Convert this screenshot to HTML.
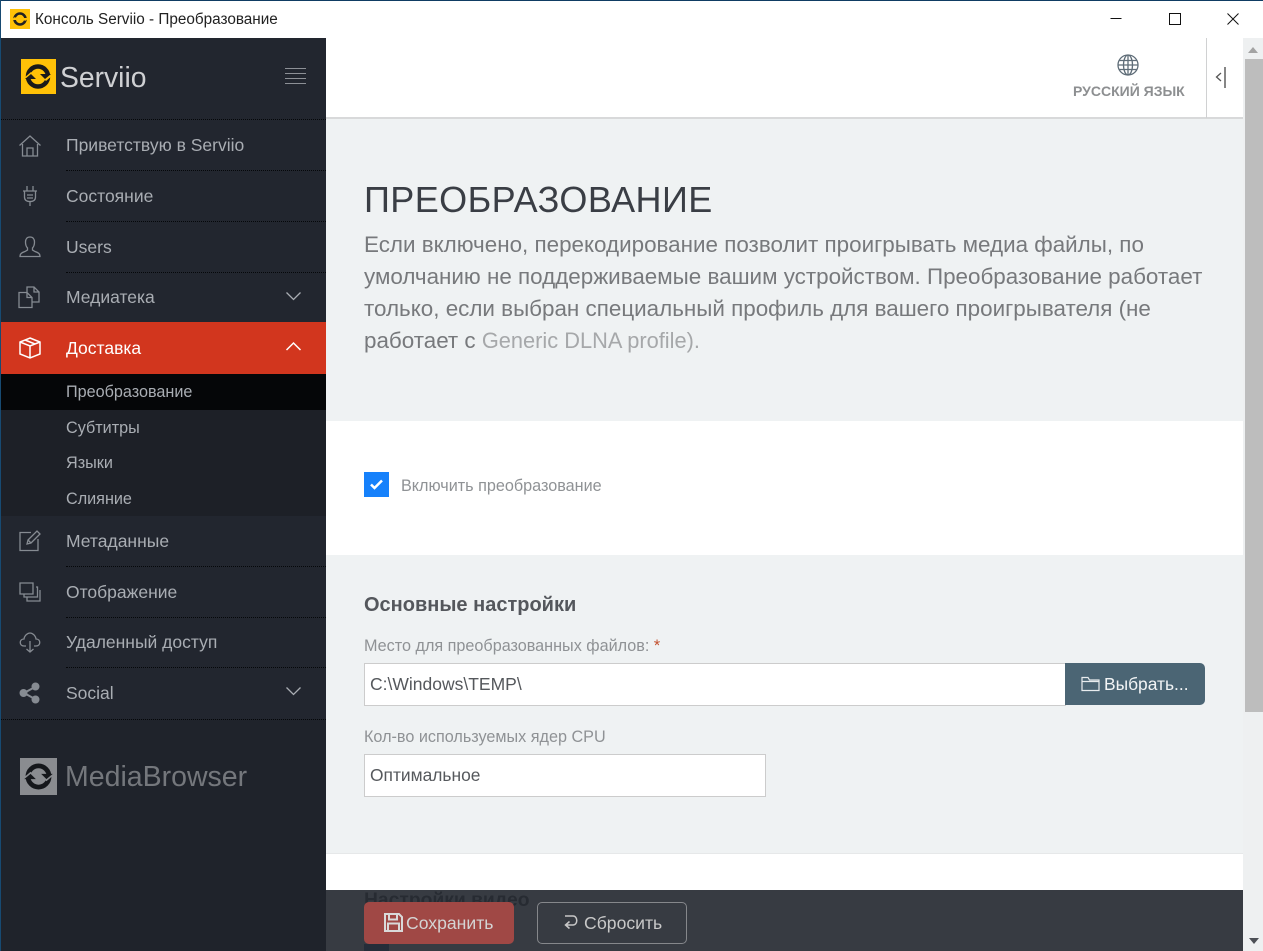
<!DOCTYPE html>
<html><head><meta charset="utf-8"><style>
html,body{margin:0;padding:0;width:1263px;height:951px;overflow:hidden;background:#fff;font-family:"Liberation Sans","Noto Sans CJK SC",sans-serif}
div,a,span.t{position:absolute;white-space:nowrap}
svg{position:absolute;overflow:visible}
.nav{left:66px;font-size:17.5px;line-height:20px;color:#a9adb3}
.sub{left:66px;font-size:16.2px;line-height:20px;color:#a9adb3}
.sep{left:66px;width:260px;height:0;border-top:1px dotted #05070a}
.ic{fill:none;stroke:#868b92;stroke-width:1.3}
.lbl{left:364px;font-size:16.2px;line-height:20px;color:#8f9295}
.lead{left:364px;font-size:22.42px;line-height:32px;color:#77797c}
</style></head><body>
<div style="left:0;top:0;width:1263px;height:1px;background:#0f3c63"></div>
<div style="left:0;top:0;width:1px;height:951px;background:#174a72"></div>
<!-- title bar -->
<div style="left:10px;top:9px;width:20px;height:20px;background:#ffc107"></div>
<svg style="left:10px;top:9px" width="20" height="20" viewBox="0 0 20 20"><circle cx="10" cy="10" r="5.500" fill="none" stroke="#222" stroke-width="2.600"/><path d="M1 11l4-3 3 3zM19 9l-4 3-3-3z" fill="#ffc107"/></svg>
<div style="left:35px;top:10px;font-size:15.3px;line-height:20px;color:#222">Консоль Serviio - Преобразование</div>
<svg style="left:1110px;top:12px" width="130" height="16" fill="none" stroke="#111" stroke-width="1"><path d="M0.500 6.500h11"/><rect x="59.500" y="1.500" width="11" height="11"/><path d="M117.500 1.500l11 11M128.500 1.500l-11 11"/></svg>
<!-- sidebar -->
<div style="left:1px;top:38px;width:325px;height:913px;background:#22262f"></div>
<div style="left:1px;top:719px;width:325px;height:232px;background:#1f232b"></div>
<div style="left:1px;top:119px;width:325px;border-top:1px dotted #05070a"></div>
<div style="left:21px;top:59px;width:35px;height:35px;background:#ffc107"></div>
<svg style="left:21px;top:59px" width="35" height="35" viewBox="0 0 35 35"><circle cx="17" cy="17.500" r="10" fill="none" stroke="#1a1a1a" stroke-width="4.500"/><path d="M3 19l7-6 6 6zM32 16l-7 6-6-6z" fill="#ffc107"/><path d="M4 20l6-5 5 5zM30 15l-6 5-5-5z" fill="#1a1a1a"/></svg>
<div style="left:60px;top:59px;font-size:28.3px;line-height:36px;color:#cfd0d3">Serviio</div>
<svg style="left:285px;top:68px" width="22" height="16" stroke="#8d9096" stroke-width="1"><path d="M0 0.500h21M0 5.500h21M0 10.500h21M0 15.500h21"/></svg>

<svg class="ic" style="left:19px;top:135px" width="22" height="22" viewBox="0 0 22 22"><path d="M0.500 10.500L11 1l10.500 9.500M3.500 9v12h15V9M8 21v-8h6v8"/></svg>
<div class="nav" style="top:135px">Приветствую в Serviio</div>
<div class="sep" style="top:170px"></div>
<svg class="ic" style="left:22px;top:185px" width="16" height="22" viewBox="0 0 16 22"><path d="M5 1v5M11 1v5M1 6h14M2.500 6v6c0 3 2 4.500 5.500 4.500s5.500-1.500 5.500-4.500V6M8 16.500V21M5 10h6M5 13h6"/></svg>
<div class="nav" style="top:186px">Состояние</div>
<div class="sep" style="top:221px"></div>
<svg class="ic" style="left:19px;top:236px" width="22" height="21" viewBox="0 0 22 21"><path d="M1 20.500h20c0-3-2-4-5-5l-2.500-1.500v-2c1.500-1.500 2-3.500 2-6C15.500 3 14 1 11 1S6.500 3 6.500 6c0 2.500.5 4.500 2 6v2L6 15.500c-3 1-5 2-5 5z"/></svg>
<div class="nav" style="top:237px">Users</div>
<div class="sep" style="top:272px"></div>
<svg class="ic" style="left:18px;top:286px" width="23" height="22" viewBox="0 0 23 22"><path d="M1 6.500h8l5 5v10H1zM9 6.500v5h5M9 6V1h7l5 5v10h-7M16 1v5h5"/></svg>
<div class="nav" style="top:287px">Медиатека</div>
<svg style="left:286px;top:292px" width="15" height="9" fill="none" stroke="#a9adb3" stroke-width="1.300"><path d="M0.500 0.500L7.500 7.500 14.500 0.500"/></svg>

<div style="left:1px;top:322px;width:325px;height:52px;background:#d2361e"></div>
<svg style="left:19px;top:337px" fill="none" stroke="#fff" stroke-width="1.500" width="22" height="22" viewBox="0 0 22 22"><path d="M11 1l10 4v12l-10 4-10-4V5zM1 5l10 4 10-4M11 9v12M6 3l10 4"/></svg>
<div class="nav" style="top:338px;color:#fff">Доставка</div>
<svg style="left:286px;top:342px" width="15" height="9" fill="none" stroke="#fff" stroke-width="1.500"><path d="M0.500 8L7.500 1 14.500 8"/></svg>

<div style="left:1px;top:374px;width:325px;height:36px;background:#050608"></div>
<div style="left:1px;top:410px;width:325px;height:106px;background:#1d2027"></div>
<div class="sub" style="top:382px">Преобразование</div>
<div class="sub" style="top:418px">Субтитры</div>
<div class="sub" style="top:453px">Языки</div>
<div class="sub" style="top:489px">Слияние</div>

<svg class="ic" style="left:19px;top:529px" width="22" height="22" viewBox="0 0 22 22"><path d="M12 3.500H1v18h18V10M8 15l1-4L18 2l3 3-9 9zM9 11l3 3"/></svg>
<div class="nav" style="top:531px">Метаданные</div>
<div class="sep" style="top:566px"></div>
<svg class="ic" style="left:19px;top:582px" width="22" height="20" viewBox="0 0 22 20"><path d="M1 1h13v11H1zM17 5h1.500v10H5v-3M21 8v11H8v-4"/></svg>
<div class="nav" style="top:582px">Отображение</div>
<div class="sep" style="top:617px"></div>
<svg class="ic" style="left:19px;top:632px" width="22" height="21" viewBox="0 0 22 21"><path d="M7 14H5c-5 0-5-7 0-7C5.500 3 9 1 11 1s5.500 2 6 6c5 0 5 7 0 7h-2M11 9v11M7.500 17l3.500 3 3.500-3"/></svg>
<div class="nav" style="top:632px">Удаленный доступ</div>
<div class="sep" style="top:667px"></div>
<svg style="left:19px;top:682px" width="22" height="22" viewBox="0 0 22 22" fill="#868b92" stroke="#868b92"><path d="M5 11L16 5M5 11l11 6" stroke-width="2"/><circle cx="4.500" cy="11" r="3.500"/><circle cx="16.500" cy="4.500" r="3.500"/><circle cx="16.500" cy="17.500" r="3.500"/></svg>
<div class="nav" style="top:683px">Social</div>
<svg style="left:286px;top:687px" width="15" height="9" fill="none" stroke="#a9adb3" stroke-width="1.300"><path d="M0.500 0.500L7.500 7.500 14.500 0.500"/></svg>
<div style="left:1px;top:719px;width:325px;border-top:1px dotted #05070a"></div>

<div style="left:20px;top:758px;width:37px;height:37px;background:#8a8c90"></div>
<svg style="left:20px;top:758px" width="37" height="37" viewBox="0 0 35 35"><circle cx="17.500" cy="17.500" r="10" fill="none" stroke="#15171b" stroke-width="4.500"/><path d="M3 19l7-6 6 6zM32 16l-7 6-6-6z" fill="#8a8c90"/><path d="M4 20l6-5 5 5zM31 15l-6 5-5-5z" fill="#15171b"/></svg>
<div style="left:65px;top:759px;font-size:28.5px;line-height:36px;color:#74777c">MediaBrowser</div>

<!-- main -->
<div style="left:326px;top:119px;width:917px;height:302px;background:#eff2f3"></div>
<div style="left:326px;top:117px;width:917px;height:2px;background:#d8d9da"></div>
<div style="left:1206px;top:38px;width:1px;height:80px;background:#d0d1d2"></div>
<svg style="left:1117px;top:54px" width="22" height="22" viewBox="0 0 22 22" fill="none" stroke="#5f6d78" stroke-width="1.300"><circle cx="11" cy="11" r="10"/><ellipse cx="11" cy="11" rx="4.500" ry="10"/><path d="M11 1v20M2 6.500h18M1 11h20M2 15.500h18"/></svg>
<div style="left:1073px;top:82px;font-size:14px;line-height:18px;font-weight:bold;color:#8d8f91">РУССКИЙ ЯЗЫК</div>
<svg style="left:1215px;top:67px" width="12" height="21" fill="none" stroke="#555"><path d="M6 6L1.500 10 6 14" stroke-width="1.300"/><path d="M10 0v21" stroke-width="1.300" stroke="#444"/></svg>

<div style="left:364px;top:180px;font-size:36px;line-height:40px;letter-spacing:.42px;color:#3a3e45">ПРЕОБРАЗОВАНИЕ</div>
<div class="lead" style="top:229px">Если включено, перекодирование позволит проигрывать медиа файлы, по</div>
<div class="lead" style="top:261px">умолчанию не поддерживаемые вашим устройством. Преобразование работает</div>
<div class="lead" style="top:293px">только, если выбран специальный профиль для вашего проигрывателя (не</div>
<div class="lead" style="top:325px">работает с <span style="color:#a6a8aa;font-size:21.8px">Generic DLNA profile).</span></div>

<div style="left:364px;top:472px;width:25px;height:25px;background:#1681fb"></div>
<svg style="left:370px;top:479px" width="13" height="11" fill="none" stroke="#fff" stroke-width="2.500"><path d="M1 5.500l3.500 3.500L12 1.500"/></svg>
<div class="lbl" style="left:401px;top:476px;">Включить преобразование</div>

<div style="left:326px;top:555px;width:917px;height:298px;background:#eff2f3"></div>
<div style="left:364px;top:594px;font-size:20px;line-height:22px;font-weight:bold;color:#54575c">Основные настройки</div>
<div class="lbl" style="top:636px">Место для преобразованных файлов: <span style="color:#c2502e">*</span></div>
<div style="left:364px;top:663px;width:701px;height:41px;background:#fff;border:1px solid #ccc;border-right:0"></div>
<div style="left:370px;top:673px;font-size:17.5px;line-height:22px;color:#55585c">C:\Windows\TEMP\</div>
<div style="left:1065px;top:663px;width:140px;height:42px;background:#4b6574;border-radius:0 5px 5px 0"></div>
<svg style="left:1081px;top:676px" width="19" height="16" fill="none" stroke="#e8ecee" stroke-width="1.200"><path d="M1 14.500V1.500h6l1.500 2.500H18v10.500zM1 5.500h17"/></svg>
<div style="left:1104px;top:673px;font-size:17.4px;line-height:22px;color:#f2f4f5">Выбрать...</div>
<div class="lbl" style="top:727px">Кол-во используемых ядер CPU</div>
<div style="left:364px;top:754px;width:400px;height:41px;background:#fff;border:1px solid #ccc"></div>
<div style="left:370px;top:765px;font-size:17.4px;line-height:20px;color:#55585c">Оптимальное</div>
<div style="left:326px;top:853px;width:917px;height:1px;background:#e6e8e9"></div>
<div style="left:364px;top:890px;font-size:19.3px;line-height:22px;font-weight:bold;color:#33363b">Настройки видео</div>
<div style="left:364px;top:944px;width:25px;height:7px;background:#1a4f8a"></div>

<!-- footer -->
<div style="left:326px;top:890px;width:917px;height:61px;background:rgba(38,42,50,.92)"></div>
<div style="left:364px;top:902px;width:150px;height:42px;background:#a04845;border-radius:5px"></div>
<svg style="left:384px;top:913px" width="19" height="19" fill="none" stroke="#d9d9d9" stroke-width="2"><path d="M1 1h14l3 3v14H1zM5 1v5.500h8V1M4 18v-7.500h11V18"/></svg>
<div style="left:406px;top:912px;font-size:17.6px;line-height:22px;color:#d4d4d4;">Сохранить</div>
<div style="left:537px;top:902px;width:148px;height:40px;border:1px solid #85878b;border-radius:5px"></div>
<svg style="left:563px;top:914px" width="16" height="19" fill="none" stroke="#c8c8c8" stroke-width="1.500"><path d="M2 2h8c5 0 5 9 0 9H3M6.500 7.500L2.500 11l4 3.500"/></svg>
<div style="left:584px;top:912px;font-size:17.6px;line-height:22px;color:#c8c8c8;">Сбросить</div>
<!-- scrollbar -->
<div style="left:1243px;top:38px;width:20px;height:913px;background:#eef0f1"></div>
<div style="left:1245px;top:59px;width:18px;height:653px;background:#bdbdbd"></div>
<svg style="left:1248px;top:47px" width="10" height="6"><path d="M0 6L5 0l5 6z" fill="#a3a3a3"/></svg>
<svg style="left:1249px;top:938px" width="10" height="6"><path d="M0 0l10 0-5 6z" fill="#4d5056"/></svg>
</body></html>
